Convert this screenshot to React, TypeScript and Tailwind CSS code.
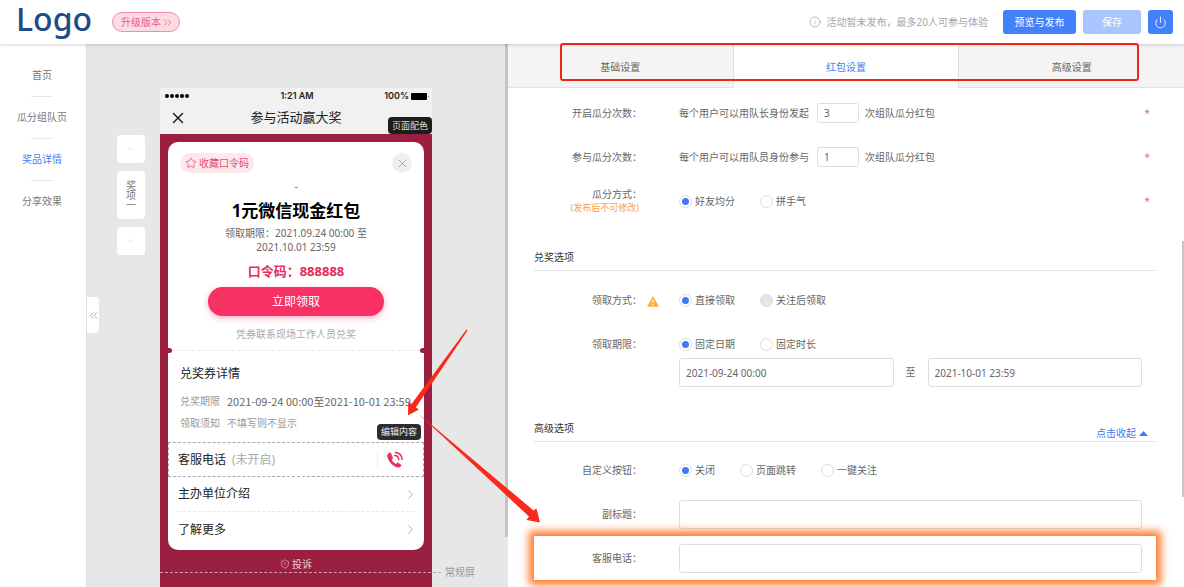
import React from "react";
import { ChevronDown, ChevronRight, ChevronUp, ChevronsLeft, ChevronsRight, Info, Power, ShieldAlert, Star, X } from "lucide-react";

const navItems = ["首页", "瓜分组队页", "奖品详情", "分享效果"];
const tabs = ["基础设置", "红包设置", "高级设置"];

const Header = () => (
  <header className="relative z-10 flex h-11 shrink-0 items-center bg-white pl-4 pr-[11px] shadow-[0_1px_3px_rgba(0,0,0,0.18)]">
    <h1 className="mb-[6px] text-[32px] font-medium leading-9 text-[#1f4c86]">Logo</h1>
    <a href="#upgrade" className="ml-5 flex h-5 items-center rounded-full border border-[#f68ba2] bg-[#fcdce4] pl-2 pr-[5px] text-[#e8627f]">
      升级版本
      <ChevronsRight size={13} strokeWidth={1.5} />
    </a>
    <p className="ml-auto mr-[15px] flex items-center gap-[6px] text-[#a6a6a6]">
      <Info size={12} strokeWidth={1.5} />
      活动暂未发布，最多20人可参与体验
    </p>
    <div className="flex gap-[7px] text-white">
      <button className="h-6 w-[73px] rounded-[3px] bg-[#4381fb]">预览与发布</button>
      <button className="h-6 w-[58px] rounded-[3px] bg-[#a9c5fd]">保存</button>
      <button aria-label="退出" className="flex h-6 w-[25px] items-center justify-center rounded-[3px] bg-[#4381fb]">
        <Power size={13} strokeWidth={1.5} />
      </button>
    </div>
  </header>
);

const Sidebar = () => (
  <nav className="flex w-[86px] shrink-0 flex-col items-center bg-white pr-[2px] pt-[11px]">
    {navItems.map((item, index) => (
      <React.Fragment key={item}>
        {index > 0 && <span className="h-px w-[22px] bg-[#e9e9e9]" />}
        <a href="#" className={`flex h-[41px] items-center ${index === 2 ? "text-[#4a7df0]" : "text-[#777]"}`}>
          {item}
        </a>
      </React.Fragment>
    ))}
  </nav>
);

const PhoneIcon = () => (
  <svg width="18" height="18" viewBox="0 0 18 18" fill="none" aria-hidden="true">
    <path
      d="M3.3 1.8 1.7 3.1C.6 4.3 1.3 7.6 3.6 10.7c2.7 3.6 6.7 6.1 9.3 5.9 1.1-.1 1.9-1 2.3-1.8.3-.6.1-1-.4-1.4l-2.5-1.7c-.5-.3-1-.2-1.4.2l-.9 1c-1.5-.5-3.6-2.5-4.3-4.1l.9-.9c.4-.4.5-.9.2-1.4L5 2.1c-.4-.6-1-.8-1.7-.3Z"
      fill="#e8305f"
    />
    <path d="M8.8 4.6c2.3.1 3.8 1.6 4 4M9.2 1.4c4 .2 6.6 2.9 6.9 7" stroke="#e8305f" strokeWidth="1.5" strokeLinecap="round" />
  </svg>
);

const PhonePreview = () => (
  <div className="mt-11 flex w-[272px] shrink-0 flex-col bg-[#9b1f40]">
    <div className="relative h-[46px] shrink-0 bg-[#f1f1f1] text-[#222]">
      <div className="flex h-4 items-center justify-between pl-[5px] pr-[3px] font-['Inter',sans-serif] text-[9px] font-semibold">
        <span className="flex w-16 gap-px">
          {[0, 1, 2, 3, 4].map((dot) => (
            <i key={dot} className="size-1 rounded-full bg-black" />
          ))}
        </span>
        <span>1:21 AM</span>
        <span className="flex w-16 items-center justify-end gap-[2px] whitespace-nowrap">
          100%
          <svg width="18" height="7" viewBox="0 0 18 7" aria-hidden="true">
            <rect width="16" height="7" rx="1" />
            <path d="M17 2.2q1 1.3 0 2.6z" />
          </svg>
        </span>
      </div>
      <div className="grid h-7 grid-cols-[1fr_auto_1fr] items-center px-[9px]">
        <X size={18} strokeWidth={2} />
        <span className="text-[13px]">参与活动赢大奖</span>
      </div>
      <span className="absolute bottom-0 right-0 flex h-[17px] items-center rounded-sm bg-[#1d1d1d] px-1 text-[9px] text-[#ddd]">页面配色</span>
    </div>

    {/* Prize card */}
    <div className="mx-2 mt-2 rounded-[10px] bg-white">
      <div className="flex h-[31px] items-end justify-between px-3">
        <button className="flex h-5 items-center gap-[2px] rounded-full bg-[#fde8ed] px-[5px] text-[#e34b70]">
          <Star size={12} strokeWidth={1.5} />
          收藏口令码
        </button>
        <button aria-label="关闭" className="flex size-5 items-center justify-center rounded-full bg-[#efefef] text-[#999]">
          <X size={13} strokeWidth={1.5} />
        </button>
      </div>
      <div className="flex flex-col items-center pt-[6px] text-[#666]">
        <span className="h-[14px] leading-[14px]">-</span>
        <h2 className="mt-1 text-[17px] font-bold leading-7 text-black">1元微信现金红包</h2>
        <p className="mt-px whitespace-nowrap text-center leading-[14px]">
          领取期限：2021.09.24 00:00 至<br />
          2021.10.01 23:59
        </p>
        <p className="mt-2 text-[13px] font-bold leading-[18px] text-[#e52d5b]">口令码：888888</p>
        <button className="mt-[7px] h-[29px] w-44 rounded-full bg-[#f73163] text-[12px] text-white shadow-[0_2px_6px_rgba(247,49,99,0.4)]">立即领取</button>
        <p className="mt-[10px] leading-4 text-[#aaa]">凭券联系现场工作人员兑奖</p>
      </div>
      <div className="mt-[6px] flex h-[5px] items-center justify-between">
        <i className="h-[5px] w-1 rounded-r-full bg-[#9b1f40]" />
        <i className="h-0 flex-1 border-t border-dashed border-[#e9e9e9]" />
        <i className="h-[5px] w-1 rounded-l-full bg-[#9b1f40]" />
      </div>
      <div className="relative h-[89px] px-3 pt-3 text-[#999]">
        <h3 className="text-[12px] leading-[18px] text-[#222]">兑奖券详情</h3>
        <p className="mt-[9px] flex gap-[7px] whitespace-nowrap leading-[18px]">
          兑奖期限
          <span className="font-['Noto_Sans_CJK_SC',sans-serif] text-[11px] text-[#666]">2021-09-24 00:00至2021-10-01 23:59</span>
        </p>
        <p className="mt-1 flex gap-[7px] leading-[18px]">
          领取须知<span>不填写则不显示</span>
        </p>
        <span className="absolute bottom-[2px] right-[3px] flex h-4 items-center rounded-sm bg-[#2c2c2c] px-1 text-[9px] text-[#eee]">编辑内容</span>
      </div>
      <div className="flex h-[35px] items-center border border-dashed border-[#aaa] pl-[9px] pr-[19px] text-[12px] text-[#222]">
        客服电话<span className="ml-[6px] text-[#aaa]">(未开启)</span>
        <button aria-label="拨打客服电话" className="ml-auto border-l border-[#eee] pl-2">
          <PhoneIcon />
        </button>
      </div>
      <div className="px-[10px] text-[12px] text-[#222]">
        <a href="#host" className="flex h-[35px] items-center justify-between border-b border-dashed border-[#e6e6e6]">
          主办单位介绍
          <ChevronRight size={15} className="-mr-1 text-[#aaa]" strokeWidth={1.5} />
        </a>
        <a href="#more" className="flex h-[38px] items-center justify-between pb-[3px]">
          了解更多
          <ChevronRight size={15} className="-mr-1 text-[#aaa]" strokeWidth={1.5} />
        </a>
      </div>
    </div>
    <a href="#report" className="mt-[6px] flex h-4 items-center justify-center gap-[2px] text-[#eecbd4]">
      <ShieldAlert size={10} strokeWidth={1.5} />
      投诉
    </a>
  </div>
);

const Preview = () => (
  <main className="relative flex w-[422px] shrink-0 overflow-hidden border-l border-[#dedede] bg-[#e7e7e7] pl-[30px]">
    <button aria-label="收起" className="absolute left-0 top-[253px] flex h-9 w-3 items-center justify-center rounded-r-sm bg-white text-[#999]">
      <ChevronsLeft size={13} strokeWidth={1.5} className="shrink-0" />
    </button>
    <div className="mr-[15px] mt-[91px] flex w-7 shrink-0 flex-col gap-2 text-[#777]">
      <button aria-label="上一项" className="flex h-7 items-center justify-center rounded-sm bg-white text-[#ddd]">
        <ChevronUp size={12} strokeWidth={1.5} />
      </button>
      <button className="flex h-12 items-center justify-center rounded-sm bg-white leading-[10px]">
        <span className="w-[10px]">奖项一</span>
      </button>
      <button aria-label="下一项" className="flex h-7 items-center justify-center rounded-sm bg-white text-[#ddd]">
        <ChevronDown size={12} strokeWidth={1.5} />
      </button>
    </div>
    <PhonePreview />
    {/* Fold line of a regular screen */}
    <div className="absolute left-[73px] top-[520px] flex items-center gap-1 leading-4 text-[#999]">
      <i className="w-[281px] border-t border-dashed border-[#c9a3ae]" />
      常规屏
    </div>
    <i className="absolute right-0 top-0 h-[493px] w-[3px] bg-[#c3c3c3]" />
  </main>
);

type RowProps = {
  label: string;
  htmlFor?: string;
  note?: string;
  warning?: boolean;
  required?: boolean;
  highlight?: boolean;
  children: React.ReactNode;
};

const Row = ({ label, htmlFor, note, warning, required, highlight, children }: RowProps) => (
  <div className={`flex h-11 items-center pr-[14px] ${highlight ? "relative bg-white shadow-[0_0_8px_5px_#ff7a2b]" : ""}`}>
    <div className="w-[108px] shrink-0 text-right leading-[14px]">
      {htmlFor ? <label htmlFor={htmlFor}>{label}：</label> : <span>{label}：</span>}
      {note && <p className="pr-[3px] text-[9px] text-[#f9a04f]">{note}</p>}
    </div>
    <div className="flex w-[37px] shrink-0 justify-center">
      {warning && (
        <svg width="12" height="11" viewBox="0 0 12 11" className="-ml-4 mt-[2px]" aria-hidden="true">
          <path d="M6 .8 11.3 10.2H.7z" fill="#fbb13c" stroke="#fbb13c" strokeLinejoin="round" />
          <path d="M6 3.8v3.2M6 8.2v1.2" stroke="#fff" strokeWidth="1.2" />
        </svg>
      )}
    </div>
    <div className="flex flex-1 items-center">{children}</div>
    {required && <span className="-mr-2 w-4 text-right text-[#f56c6c]">*</span>}
  </div>
);

const RadioGroup = ({ name, options, disabledIndex }: { name: string; options: string[]; disabledIndex?: number }) => (
  <div className="flex h-5 items-center gap-[25px]">
    {options.map((option, index) => (
      <label key={option} className="flex items-center gap-[3px]">
        <input
          type="radio"
          name={name}
          defaultChecked={index === 0}
          disabled={index === disabledIndex}
          className="grid size-[13px] appearance-none place-content-center rounded-full border border-[#dcdcdc] bg-white before:size-[7px] before:rounded-full checked:before:bg-[#3f7cf4] disabled:bg-[#e6e6e6]"
        />
        {option}
      </label>
    ))}
  </div>
);

const inputClass = "h-[29px] min-w-0 flex-1 rounded-[3px] border border-[#dedede] bg-white px-[6px] outline-none";
const countClass = "ml-2 mr-[6px] h-5 w-[42px] rounded-[3px] border border-[#dedede] px-[6px] outline-none";

const Settings = () => (
  <section className="relative min-w-0 flex-1 bg-white text-[#666]">
    <div className="flex h-11 bg-[#f4f4f4]">
      {tabs.map((tab, index) => (
        <button
          key={tab}
          className={`flex-1 pt-[3px] ${index === 1 ? "border-x border-[#e2e2e2] bg-white text-[#4a7df0]" : "border-b border-[#e2e2e2]"}`}
        >
          {tab}
        </button>
      ))}
    </div>
    <div className="pointer-events-none absolute -top-px left-[52px] right-[45px] z-20 h-[38px] rounded-[3px] border-2 border-[#ec2619]" />

    <form className="pl-[26px] pr-7 pt-[3px]">
      <Row label="开启瓜分次数" htmlFor="captain-times" required>
        每个用户可以用队长身份发起
        <input id="captain-times" defaultValue="3" className={countClass} />
        次组队瓜分红包
      </Row>
      <Row label="参与瓜分次数" htmlFor="member-times" required>
        每个用户可以用队员身份参与
        <input id="member-times" defaultValue="1" className={countClass} />
        次组队瓜分红包
      </Row>
      <Row label="瓜分方式" note="(发布后不可修改)" required>
        <RadioGroup name="split" options={["好友均分", "拼手气"]} />
      </Row>

      <h2 className="flex h-12 items-end border-b border-[#e2e2e2] pb-[5px] leading-4 text-[#333]">兑奖选项</h2>
      <div className="pt-[7px]">
        <Row label="领取方式" warning>
          <RadioGroup name="receive" options={["直接领取", "关注后领取"]} disabledIndex={1} />
        </Row>
        <div className="h-8">
          <Row label="领取期限">
            <RadioGroup name="period" options={["固定日期", "固定时长"]} />
          </Row>
        </div>
        <div className="relative mt-1 flex items-center pl-[145px] pr-[14px]">
          <input aria-label="开始时间" defaultValue="2021-09-24 00:00" className={inputClass} />
          <span className="px-3">至</span>
          <input aria-label="结束时间" defaultValue="2021-10-01 23:59" className={inputClass} />
        </div>
      </div>

      <div className="mt-[7px] flex h-12 items-end justify-between border-b border-[#e2e2e2] pb-[5px] leading-4">
        <h2 className="text-[#333]">高级选项</h2>
        <button type="button" className="-mb-[5px] flex items-center gap-[3px] pr-2 text-[#3f78ee]">
          点击收起
          <svg width="9" height="5" viewBox="0 0 9 5" fill="currentColor" aria-hidden="true">
            <path d="M4.5 0 9 5H0z" />
          </svg>
        </button>
      </div>
      <div className="pt-[6px]">
        <Row label="自定义按钮">
          <RadioGroup name="custom" options={["关闭", "页面跳转", "一键关注"]} />
        </Row>
        <Row label="副标题" htmlFor="subtitle">
          <input id="subtitle" className={inputClass} />
        </Row>
        <Row label="客服电话" htmlFor="service-phone" highlight>
          <input id="service-phone" className={inputClass} />
        </Row>
      </div>
    </form>
    <i className="absolute right-0 top-[197px] h-64 w-[2px] bg-[#c6c6c6]" />
  </section>
);

const App = () => (
  <div className="relative flex h-screen flex-col overflow-hidden font-['Noto_Sans','Noto_Sans_CJK_SC',sans-serif] text-[10px]">
    <Header />
    <div className="relative flex min-h-0 flex-1">
      <Sidebar />
      <Preview />
      <Settings />
    </div>
    {/* Arrows that lead from the preview to the phone field */}
    <svg width="560" height="540" className="pointer-events-none absolute left-0 top-0 z-20" fill="#f9291b" aria-hidden="true">
      <path d="M466.5 329.5 411.5 404 408.3 402 408 415.3 419 409.5 415.8 407.5 467.5 330.5z" />
      <path d="M417.500 413 533.5 510.5 536.5 508.5 540 522.5 526.5 520 529 516.5z" />
    </svg>
  </div>
);

export default App;
